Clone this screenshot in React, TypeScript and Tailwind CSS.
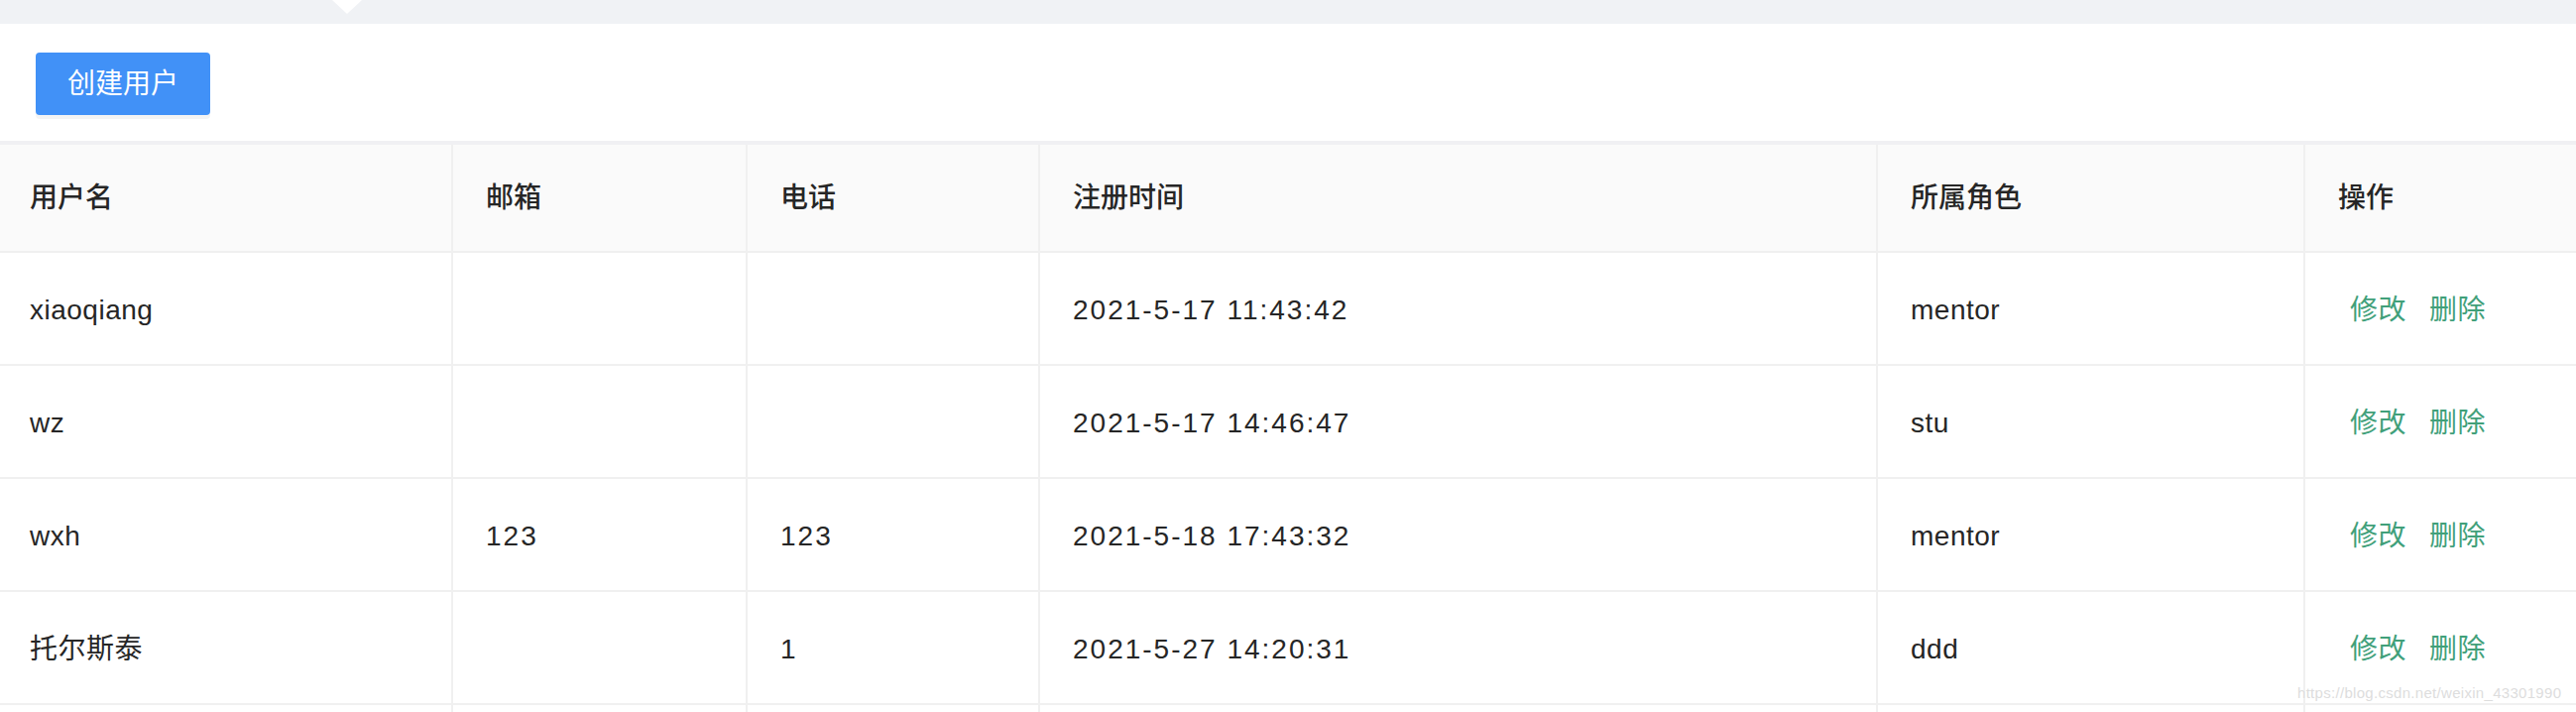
const rows = [
  { name: "xiaoqiang", email: "", phone: "", time: "2021-5-17 11:43:42", role: "mentor" },
  { name: "wz", email: "", phone: "", time: "2021-5-17 14:46:47", role: "stu" },
  { name: "wxh", email: "123", phone: "123", time: "2021-5-18 17:43:32", role: "mentor" },
  { name: "托尔斯泰", email: "", phone: "1", time: "2021-5-27 14:20:31", role: "ddd" },
];

const cols = ["用户名", "邮箱", "电话", "注册时间", "所属角色", "操作"];

const font = { fontFamily: '"Liberation Sans", "Noto Sans CJK SC", sans-serif' };

function Cell({ children, last, first }: { children?: React.ReactNode; last?: boolean; first?: boolean }) {
  return (
    <div
      className={`flex items-center border-b-2 border-[#f0f0f0] pt-[3px] ${last ? "" : "border-r-2"} ${
        first ? "pl-[30px]" : "pl-[33px]"
      }`}
    >
      {children}
    </div>
  );
}

export default function App() {
  return (
    <div className="relative h-[718px] w-[2598px] overflow-hidden bg-white text-[28px] text-[#262626]" style={font}>
      {/* top gray strip with tab notch */}
      <div className="relative h-[24px] bg-[#f0f2f5]">
        <div className="absolute left-[335px] top-0 h-0 w-0 border-l-[15px] border-r-[15px] border-t-[14px] border-l-transparent border-r-transparent border-t-white" />
      </div>

      <div className="h-[118px] px-[36px] pt-[29px]">
        <button className="h-[63px] w-[176px] rounded-[4px] bg-[#4191f7] text-[28px] text-white shadow-[0_4px_0_rgba(0,0,0,0.045)]">
          创建用户
        </button>
      </div>

      <div className="h-[4px] bg-[#f0f0f3]" />

      <div className="grid grid-cols-[457px_297px_295px_845px_431px_273px] auto-rows-[114px] [grid-template-rows:109px]">
        {cols.map((c, i) => (
          <div
            key={c}
            className={`flex items-center border-b-2 border-[#f0f0f0] bg-[#fafafa] font-medium ${
              i === cols.length - 1 ? "" : "border-r-2"
            } ${i === 0 ? "pl-[30px]" : "pl-[33px]"}`}
          >
            {c}
          </div>
        ))}

        {rows.map((r) => (
          <div key={r.time} className="contents tracking-[0.5px]">
            <Cell first>{r.name}</Cell>
            <Cell>
              <span className="tracking-[2px]">{r.email}</span>
            </Cell>
            <Cell>
              <span className="tracking-[2px]">{r.phone}</span>
            </Cell>
            <Cell>
              <span className="tracking-[2px]">{r.time}</span>
            </Cell>
            <Cell>{r.role}</Cell>
            <Cell last>
              <span className="ml-[12px] text-[#41a07a]">修改</span>
              <span className="ml-[23px] text-[#41a07a]">删除</span>
            </Cell>
          </div>
        ))}

        <Cell first />
        <Cell />
        <Cell />
        <Cell />
        <Cell />
        <Cell last />
      </div>

      <div className="absolute left-[2317px] top-[688px] text-[15px] tracking-[0.3px] text-[#dddddd] [text-shadow:0_0_1px_#ffffff]">
        https://blog.csdn.net/weixin_43301990
      </div>
    </div>
  );
}
